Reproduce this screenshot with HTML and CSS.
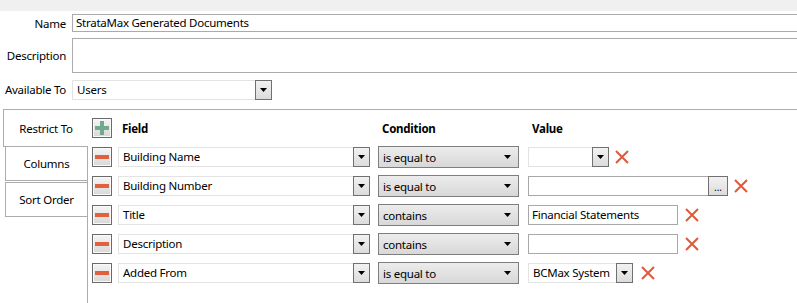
FILE: index.html
```html
<!DOCTYPE html>
<html lang="en">
<head>
    <meta charset="UTF-8">
    <title>Document Filter</title>
    <link rel="stylesheet" href="styles.css">
</head>
<body>
    <div class="topbar"></div>

    <!-- Datos generales -->
    <div class="form">
        <label class="lbl">Name</label>
        <div class="textbox name-box">StrataMax Generated Documents</div>

        <label class="lbl">Description</label>
        <div class="textbox desc-box"></div>

        <label class="lbl">Available To</label>
        <div class="combo avail">
            <span class="combo-text">Users</span>
            <span class="ddbtn"><i class="arrow"></i></span>
        </div>
    </div>

    <!-- Pestañas -->
    <div class="tabs">
        <div class="tablist">
            <div class="tab active">Restrict To</div>
            <div class="tab">Columns</div>
            <div class="tab second">Sort Order</div>
        </div>

        <div class="panel">
            <div class="row head">
                <span class="iconbtn"><i class="plus"></i></span>
                <span class="h-field">Field</span>
                <span class="h-cond">Condition</span>
                <span class="h-value">Value</span>
            </div>

            <div class="row">
                <span class="iconbtn"><i class="minus"></i></span>
                <div class="combo fieldsel"><span class="combo-text">Building Name</span><span class="ddbtn"><i class="arrow"></i></span></div>
                <div class="cond"><span>is equal to</span><i class="arrow"></i></div>
                <div class="combo val v-small"><span class="combo-text"></span><span class="ddbtn"><i class="arrow"></i></span></div>
                <svg class="del d1" width="14" height="14" viewBox="0 0 14 14"><path d="M1 1L13 13M13 1L1 13"/></svg>
            </div>

            <div class="row">
                <span class="iconbtn"><i class="minus"></i></span>
                <div class="combo fieldsel"><span class="combo-text">Building Number</span><span class="ddbtn"><i class="arrow"></i></span></div>
                <div class="cond"><span>is equal to</span><i class="arrow"></i></div>
                <div class="val v-browse"><span class="input"></span><span class="dots">...</span></div>
                <svg class="del d2" width="14" height="14" viewBox="0 0 14 14"><path d="M1 1L13 13M13 1L1 13"/></svg>
            </div>

            <div class="row">
                <span class="iconbtn"><i class="minus"></i></span>
                <div class="combo fieldsel"><span class="combo-text">Title</span><span class="ddbtn"><i class="arrow"></i></span></div>
                <div class="cond"><span>contains</span><i class="arrow"></i></div>
                <div class="val input v-text">Financial Statements</div>
                <svg class="del d3" width="14" height="14" viewBox="0 0 14 14"><path d="M1 1L13 13M13 1L1 13"/></svg>
            </div>

            <div class="row">
                <span class="iconbtn"><i class="minus"></i></span>
                <div class="combo fieldsel"><span class="combo-text">Description</span><span class="ddbtn"><i class="arrow"></i></span></div>
                <div class="cond"><span>contains</span><i class="arrow"></i></div>
                <div class="val input v-text"></div>
                <svg class="del d3" width="14" height="14" viewBox="0 0 14 14"><path d="M1 1L13 13M13 1L1 13"/></svg>
            </div>

            <div class="row">
                <span class="iconbtn"><i class="minus"></i></span>
                <div class="combo fieldsel"><span class="combo-text">Added From</span><span class="ddbtn"><i class="arrow"></i></span></div>
                <div class="cond"><span>is equal to</span><i class="arrow"></i></div>
                <div class="combo val v-mid"><span class="combo-text">BCMax System</span><span class="ddbtn"><i class="arrow"></i></span></div>
                <svg class="del d5" width="14" height="14" viewBox="0 0 14 14"><path d="M1 1L13 13M13 1L1 13"/></svg>
            </div>
        </div>
    </div>
</body>
</html>
```

FILE: styles.css
```css
body {
    font-family: 'Noto Sans', sans-serif;
    font-size: 11.5px;
    letter-spacing: -0.25px;
    color: #000;
    background-color: #fff;
    margin: 0;
    width: 797px;
    height: 303px;
    overflow: hidden;
}
.topbar {
    height: 11px;
    background-color: #f0f0f0;
}
.form {
    display: grid;
    grid-template-columns: 72px 1fr;
    grid-template-rows: 18px 35px 20px;
    row-gap: 6px;
    margin-top: 3px;
}
.lbl {
    text-align: right;
    padding-right: 6px;
    align-self: center;
    white-space: nowrap;
}
.textbox {
    border: 1px solid #ababab;
    border-right: none;
    padding-left: 3px;
    line-height: 16px;
}
.avail {
    width: 200px;
    margin-top: 1px;
}

/* Combos */
.combo {
    display: flex;
    height: 20px;
    box-sizing: border-box;
}
.combo-text {
    flex: 1;
    border: 1px solid #e3e3e3;
    border-right: none;
    padding-left: 4px;
    line-height: 18px;
    white-space: nowrap;
    overflow: hidden;
}
.ddbtn {
    width: 17px;
    box-sizing: border-box;
    border: 1px solid #707070;
    background: linear-gradient(#f2f2f2, #dcdcdc);
    display: flex;
    align-items: center;
    justify-content: center;
}
.arrow {
    display: block;
    width: 7px;
    height: 4px;
    background-color: #000;
    clip-path: polygon(0 0, 100% 0, 50% 100%);
}

/* Pestañas */
.tabs {
    display: flex;
    margin-left: 3px;
    margin-top: 10px;
    border-top: 1px solid #acacac;
    height: 193px;
}
.tablist {
    width: 84px;
    flex-shrink: 0;
}
.tab {
    display: flex;
    align-items: center;
    justify-content: center;
    height: 33px;
    margin-left: 2px;
    border-left: 1px solid #acacac;
    border-bottom: 1px solid #acacac;
}
.tab.active {
    position: relative;
    height: 36px;
    margin-left: 0;
    margin-right: -1px;
    background-color: #fff;
}
.tab.second {
    margin-top: 1px;
    border-top: 1px solid #acacac;
}
.panel {
    flex: 1;
    border-left: 1px solid #acacac;
    padding: 8px 0 0 4px;
}
.row {
    display: flex;
    align-items: center;
    height: 22px;
    margin-bottom: 7px;
}
.row.head {
    height: 20px;
    margin-bottom: 8px;
    font-weight: 700;
}
.iconbtn {
    width: 20px;
    height: 20px;
    box-sizing: border-box;
    border: 1px solid #6a6a6a;
    box-shadow: inset 0 0 0 1px #fafafa;
    background: linear-gradient(#f5f5f5, #d8d8d8);
    display: flex;
    align-items: center;
    justify-content: center;
    flex-shrink: 0;
}
.plus {
    width: 14px;
    height: 14px;
    background:
        linear-gradient(#72a98c, #72a98c) center / 4px 14px no-repeat,
        linear-gradient(#72a98c, #72a98c) center / 14px 4px no-repeat;
}
.minus {
    width: 14px;
    height: 4px;
    background-color: #e0603f;
}
.h-field {
    width: 252px;
    margin-left: 6px;
    padding-left: 4px;
    box-sizing: border-box;
}
.h-cond {
    width: 141px;
    margin-left: 8px;
    padding-left: 4px;
    box-sizing: border-box;
}
.h-value {
    margin-left: 9px;
    padding-left: 4px;
}
.fieldsel {
    width: 252px;
    margin-left: 6px;
}
.cond {
    width: 141px;
    height: 22px;
    margin-left: 8px;
    box-sizing: border-box;
    border: 1px solid #7e7e7e;
    background: linear-gradient(#ececec, #d8d8d8);
    display: flex;
    align-items: center;
    justify-content: space-between;
    padding: 0 7px 0 4px;
}
.val {
    margin-left: 9px;
    height: 20px;
}
.input {
    display: block;
    box-sizing: border-box;
    border: 1px solid #a8a8a8;
    padding-left: 3px;
    line-height: 18px;
    white-space: nowrap;
}
.v-small {
    width: 81px;
}
.v-mid {
    width: 105px;
}
.v-text {
    width: 150px;
}
.v-browse {
    display: flex;
}
.v-browse .input {
    width: 180px;
    border-right: none;
}
.dots {
    width: 20px;
    box-sizing: border-box;
    border: 1px solid #707070;
    background: linear-gradient(#f2f2f2, #dcdcdc);
    font-size: 10px;
    line-height: 20px;
    letter-spacing: 0;
    text-align: center;
}
.del {
    fill: none;
    stroke: #e0583a;
    stroke-width: 2;
    flex-shrink: 0;
}
.d1 {
    margin-left: 6px;
}
.d2 {
    margin-left: 6px;
}
.d3 {
    margin-left: 7px;
}
.d5 {
    margin-left: 8px;
}
```
